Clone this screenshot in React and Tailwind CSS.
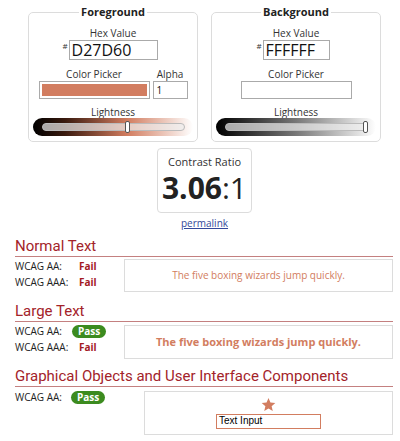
import React from "react";

const FG = "#D27D60";

function Slider({ gradient, pos }) {
  return (
    <div
      className="relative mx-auto mt-[-1px] h-[18px] w-[160px] rounded-full"
      style={{ background: gradient }}
    >
      <div className="absolute left-[9px] right-[8px] top-[5px] h-[8px] rounded-full border border-[#bbb] bg-[#eeeeee]/70" />
      <div
        className="absolute top-[3px] h-[12px] w-[5px] rounded-[2px] border border-[#555] bg-white"
        style={{ left: pos }}
      />
    </div>
  );
}

function Panel({ title, hex, color, alpha, gradient, pos }) {
  return (
    <fieldset className="w-[170px] rounded-[5px] border border-[#dcdcdc] px-0 pb-[5px] text-center">
      <legend className="mx-auto px-[2px] text-[11px] font-bold leading-[14px] text-[#222]">
        {title}
      </legend>
      <div className="mt-[7px] text-[10px] leading-[14px] text-[#333]">Hex Value</div>
      <div className="flex justify-center">
        <span className="mr-[1px] mt-[2px] text-[8px] leading-[8px] text-[#333]">#</span>
        <div
          className={`h-[20px] border border-[#aaa] pl-[2px] text-left text-[16px] leading-[18px] text-[#111] ${
            alpha ? "w-[89px]" : "w-[67px]"
          }`}
        >
          {hex}
        </div>
        <span className="w-[6px]" />
      </div>
      <div className="mt-[7px] flex justify-center gap-[3px]">
        <div className="w-[111px]">
          <div className="text-[10px] leading-[14px] text-[#333]">Color Picker</div>
          <div className="h-[18px] border border-[#aaa] bg-white p-[2px]">
            <div className="h-full w-full" style={{ background: color }} />
          </div>
        </div>
        {alpha && (
          <div className="w-[35px]">
            <div className="text-[10px] leading-[14px] text-[#333]">Alpha</div>
            <div className="h-[18px] border border-[#aaa] pl-[3px] text-left text-[10px] leading-[16px] text-[#111]">
              1
            </div>
          </div>
        )}
      </div>
      <div className="mt-[6px] text-[10px] leading-[14px] text-[#333]">Lightness</div>
      <Slider gradient={gradient} pos={pos} />
    </fieldset>
  );
}

function Verdict({ pass }) {
  return pass ? (
    <span className="inline-block rounded-full bg-[#3c8b1f] px-[6px] text-[10px] font-bold leading-[13px] text-white">
      Pass
    </span>
  ) : (
    <span className="inline-block pl-[7px] text-[10px] font-bold leading-[13px] text-[#a3191f]">
      Fail
    </span>
  );
}

function Heading({ children }) {
  return (
    <div
      className="border-b border-[#c48080] pb-[1px] text-[15px] leading-[18px] text-[#a3232a]"
      style={{ fontFamily: "Roboto, 'Liberation Sans', sans-serif" }}
    >
      {children}
    </div>
  );
}

function Rows({ rows }) {
  return (
    <div className="w-[109px] shrink-0">
      {rows.map(([label, pass]) => (
        <div key={label} className="flex h-[16px] items-center text-[10px] text-[#222]">
          <span className="w-[57px]">{label}</span>
          <Verdict pass={pass} />
        </div>
      ))}
    </div>
  );
}

export default function App() {
  return (
    <div
      className="h-[441px] w-[400px] overflow-hidden bg-white"
      style={{ fontFamily: "'Open Sans', 'Liberation Sans', sans-serif" }}
    >
      <div className="flex justify-center gap-[13px] pl-[9px] pt-[5px]">
        <Panel
          title="Foreground"
          hex="D27D60"
          color={FG}
          alpha
          gradient={`linear-gradient(to right, #000 0%, #3a1a0e 20%, ${FG} 59%, #fff 100%)`}
          pos="92px"
        />
        <Panel
          title="Background"
          hex="FFFFFF"
          color="#fff"
          gradient="linear-gradient(to right, #000 0%, #777 50%, #fff 100%)"
          pos="147px"
        />
      </div>

      <div className="flex flex-col items-center pl-[9px]">
        <div className="mt-[6px] flex h-[65px] w-[95px] flex-col items-center rounded-[4px] border border-[#dcdcdc]">
          <div className="mt-[6px] text-[11px] leading-[14px] text-[#333]">Contrast Ratio</div>
          <div className="mt-[2px] text-[30px] leading-[34px] text-[#222]">
            <span className="font-bold">3.06</span>:1
          </div>
        </div>
        <a className="mt-[3px] text-[10px] leading-[14px] text-[#34489a] underline">permalink</a>
      </div>

      <div className="pl-[15px] pr-[7px]">
        <div className="mt-[7px]">
          <Heading>Normal Text</Heading>
          <div className="mt-[1px] flex">
            <Rows rows={[["WCAG AA:", false], ["WCAG AAA:", false]]} />
            <div
              className="mt-[1px] flex h-[33px] flex-1 items-center justify-center border border-[#dcdcdc] text-[10px]"
              style={{ color: FG }}
            >
              The five boxing wizards jump quickly.
            </div>
          </div>
        </div>

        <div className="mt-[10px]">
          <Heading>Large Text</Heading>
          <div className="mt-[1px] flex">
            <Rows rows={[["WCAG AA:", true], ["WCAG AAA:", false]]} />
            <div
              className="mt-[2px] flex h-[34px] flex-1 items-center justify-center border border-[#dcdcdc] text-[11px] font-bold"
              style={{ color: FG }}
            >
              The five boxing wizards jump quickly.
            </div>
          </div>
        </div>

        <div className="mt-[8px]">
          <Heading>Graphical Objects and User Interface Components</Heading>
          <div className="mt-[4px] flex">
            <div className="w-[129px] shrink-0">
              <div className="flex h-[13px] items-center text-[10px] text-[#222]">
                <span className="w-[56px]">WCAG AA:</span>
                <Verdict pass />
              </div>
            </div>
            <div className="flex h-[44px] flex-1 flex-col items-center border border-[#dcdcdc] pt-[5px]">
              <svg width="15" height="15" viewBox="0 0 24 24" fill={FG}>
                <path d="M12 1.5l3.1 7.2 7.8.7-5.9 5.2 1.8 7.7L12 18.3l-6.8 4 1.8-7.7-5.9-5.2 7.8-.7z" />
              </svg>
              <div
                className="mt-[2px] h-[15px] w-[105px] border-[1.5px] pl-[2px] text-[10px] leading-[12px] text-black"
                style={{ borderColor: FG, fontFamily: "'Liberation Sans', Arial, sans-serif" }}
              >
                Text Input
              </div>
            </div>
          </div>
        </div>
      </div>
    </div>
  );
}
